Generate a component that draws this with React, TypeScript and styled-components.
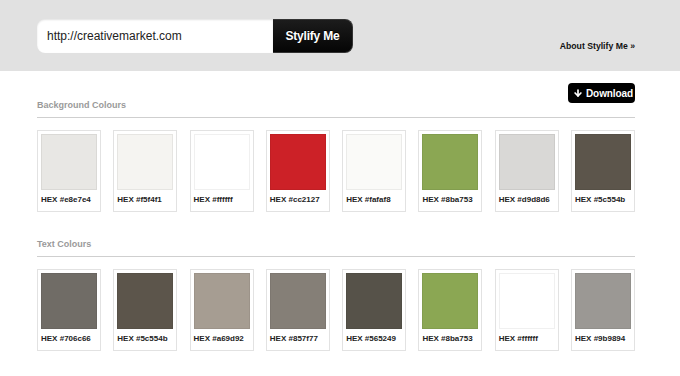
import styled, { createGlobalStyle } from "styled-components";
import { ArrowDown } from "lucide-react";

const GlobalStyle = createGlobalStyle`
  html, body {
    margin: 0;
    padding: 0;
    background: #ffffff;
    font-family: "Liberation Sans", Arial, Helvetica, sans-serif;
  }
`;

const Page = styled.div`
  width: 680px;
  min-height: 376px;
  background: #fff;
`;

const Header = styled.header`
  height: 71px;
  box-sizing: border-box;
  background: #e1e1e1;
  padding: 19px 45px 0 37px;
  display: flex;
  justify-content: space-between;
  align-items: flex-start;
`;

const Form = styled.form`
  display: flex;
  height: 34px;
`;

const UrlInput = styled.input`
  width: 236px;
  height: 34px;
  box-sizing: border-box;
  border: none;
  border-radius: 8px 0 0 8px;
  background: #fff;
  box-shadow: inset 0 1px 2px rgba(0, 0, 0, 0.12);
  padding: 0 10px;
  font-family: "Liberation Sans", Arial, sans-serif;
  font-size: 12px;
  color: #222;
  outline: none;
`;

const GoButton = styled.button`
  width: 80px;
  height: 34px;
  border: 1px solid #333;
  border-left: none;
  border-radius: 0 8px 8px 0;
  background: linear-gradient(#1c1c1c, #050505);
  color: #fff;
  font-family: "Liberation Sans", Arial, sans-serif;
  font-weight: bold;
  font-size: 12px;
  letter-spacing: -0.2px;
  text-shadow: 0 -1px 0 #000;
  cursor: pointer;
`;

const AboutLink = styled.a`
  margin-top: 21px;
  font-size: 8.7px;
  line-height: 12px;
  font-weight: bold;
  color: #111;
  text-decoration: none;
`;

const Main = styled.main`
  padding: 0 45px 0 37px;
`;

const SectionHead = styled.div<{ $top: number }>`
  display: flex;
  justify-content: space-between;
  align-items: flex-end;
  margin-top: ${(p) => p.$top}px;
  padding-bottom: 6px;
  border-bottom: 1px solid #cfcfcf;
`;

const Heading = styled.h2`
  margin: 0;
  font-size: 9px;
  line-height: 12px;
  font-weight: bold;
  color: #9a9a9a;
`;

const DownloadButton = styled.button`
  display: flex;
  align-items: center;
  gap: 3px;
  height: 20px;
  width: 67px;
  margin-bottom: 8px;
  padding: 0 0 0 5px;
  border: none;
  border-radius: 4px;
  background: #000;
  color: #fff;
  font-family: "Liberation Sans", Arial, sans-serif;
  font-weight: bold;
  font-size: 10px;
  letter-spacing: -0.1px;
  cursor: pointer;
`;

const Swatches = styled.div`
  display: grid;
  grid-template-columns: repeat(8, 64px);
  justify-content: space-between;
  margin-top: 12px;
`;

const Card = styled.div`
  box-sizing: border-box;
  height: 82px;
  border: 1px solid #e2e2e2;
  padding: 3px;
  background: #fff;
`;

const Chip = styled.div<{ $color: string }>`
  height: 56px;
  box-sizing: border-box;
  background: ${(p) => p.$color};
  border: 1px solid rgba(0, 0, 0, 0.06);
`;

const Label = styled.div`
  margin-top: 5px;
  font-size: 8px;
  line-height: 10px;
  font-weight: bold;
  color: #222;
  white-space: nowrap;
`;

const background = ["e8e7e4", "f5f4f1", "ffffff", "cc2127", "fafaf8", "8ba753", "d9d8d6", "5c554b"];
const text = ["706c66", "5c554b", "a69d92", "857f77", "565249", "8ba753", "ffffff", "9b9894"];

const SwatchGrid = ({ colors }: { colors: string[] }) => (
  <Swatches>
    {colors.map((c, i) => (
      <Card key={i}>
        <Chip $color={`#${c}`} />
        <Label>HEX #{c}</Label>
      </Card>
    ))}
  </Swatches>
);

const App = () => {
  return (
    <Page>
      <GlobalStyle />
      <Header>
        <Form onSubmit={(e) => e.preventDefault()}>
          <UrlInput defaultValue="http://creativemarket.com" />
          <GoButton type="submit">Stylify Me</GoButton>
        </Form>
        <AboutLink href="#">About Stylify Me »</AboutLink>
      </Header>
      <Main>
        <SectionHead $top={12}>
          <Heading>Background Colours</Heading>
          <DownloadButton>
            <ArrowDown size={10} strokeWidth={4} />
            Download
          </DownloadButton>
        </SectionHead>
        <SwatchGrid colors={background} />
        <SectionHead $top={26}>
          <Heading>Text Colours</Heading>
        </SectionHead>
        <SwatchGrid colors={text} />
      </Main>
    </Page>
  );
};

export default App;
